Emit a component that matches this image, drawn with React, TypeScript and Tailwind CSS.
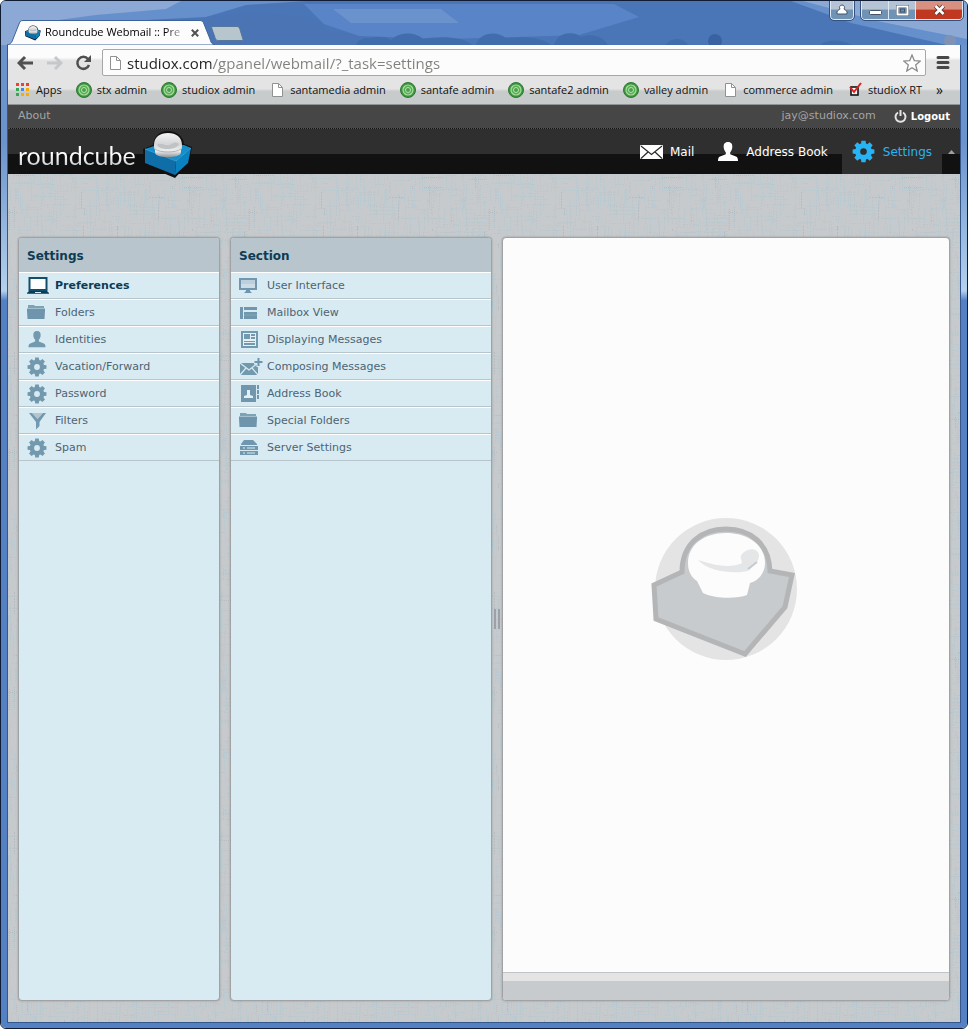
import React from 'react';
import clsx from 'clsx';

interface IconProps {
  className?: string;
}

interface ListItem {
  label: string;
  icon: React.ReactNode;
  active?: boolean;
}

/* ---------- background ---------- */

// woven threads, laid out once with a fixed seed so the tile never changes
function makeThreads(count: number, size: number) {
  let seed = 11;
  const rand = () => {
    seed = (seed * 16807) % 2147483647;
    return seed / 2147483647;
  };
  return Array.from({ length: count }, (_, i) => ({
    x: Math.floor(rand() * size),
    y: Math.floor(rand() * size),
    len: 3 + Math.floor(rand() * 20),
    dash: 1 + Math.floor(rand() * 2),
    horizontal: i % 5 < 2,
  }));
}

const TILE = 240;
const threads = makeThreads(1500, TILE);

function Linen() {
  return (
    <svg className="absolute inset-0 h-full w-full" aria-hidden="true" shapeRendering="crispEdges">
      <defs>
        <pattern id="linen" width={TILE} height={TILE} patternUnits="userSpaceOnUse">
          <rect width={TILE} height={TILE} fill="#c7cacc" />
          {threads.map((t, i) => (
            <path
              key={i}
              d={
                t.horizontal
                  ? `M${t.x} ${t.y + 0.5}h${t.len}`
                  : `M${t.x + 0.5} ${t.y}v${t.len}`
              }
              stroke={i % 29 === 0 ? '#b9bcbe' : '#b9c7ce'}
              strokeDasharray={`${t.dash} 1`}
            />
          ))}
        </pattern>
      </defs>
      <rect width="100%" height="100%" fill="url(#linen)" />
    </svg>
  );
}

function Glass() {
  return (
    <svg
      className="absolute inset-0 h-full w-full"
      viewBox="0 0 966 44"
      preserveAspectRatio="none"
      aria-hidden="true"
    >
      <rect width="966" height="44" fill="#4a76b8" />
      <path d="M0 0h305l-60 4-40 12-60 3-70 4-75 21z" fill="#6690cc" />
      <path d="M0 0h180l-15 8-70 6-45 6-25 24H0z" fill="#8ca8d4" />
      <path d="M205 16l50-5 60 6 14 14 60 5 20 8H210z" fill="#4a74b4" />
      <path d="M303 3h310l25 13-60 18-130 4-90-3-35-12z" fill="#5985c8" />
      <path d="M332 8h108l18 14H350z" fill="#6a92cc" />
      <path d="M790 0h50l126 28v16h-20L850 22z" fill="#6690cc" />
      <path d="M802 0h164v38l-90-18z" fill="#8ca8d4" />
      <g fill="#416dac">
        <path d="M355 44c2-7 10-7 15-7 12-3 20 1 30 7z" />
        <path d="M388 44c4-14 26-14 34-6 14-3 42-3 49 6z" />
        <path d="M475 44c4-14 22-14 30-7 20-2 38 0 45 7z" />
        <path d="M553 44c4-15 22-13 27-8 10-4 22-1 27 8z" />
        <path d="M665 44c4-8 18-8 22 0z" />
        <path d="M820 44c4-6 22-6 30 0z" />
      </g>
      <circle cx="714" cy="40" r="7" fill="#3a62a2" />
      <circle cx="949" cy="40" r="6" fill="#7f92b4" />
    </svg>
  );
}

/* ---------- browser icons ---------- */

function CubeIcon({ className }: IconProps) {
  return (
    <svg viewBox="0 0 50 47" className={className} aria-hidden="true">
      <defs>
        <linearGradient id="dome" x1="0" y1="0" x2="0" y2="1">
          <stop offset="0" stopColor="#f4f4f4" />
          <stop offset=".45" stopColor="#d4d6d8" />
          <stop offset=".75" stopColor="#eeeeee" />
          <stop offset="1" stopColor="#94989a" />
        </linearGradient>
      </defs>
      <path
        d="M0 18l10-4C11 4 18 0 25 0s15 4 16 13l8 3-3 16-14 15L1 34z"
        fill="#111111"
      />
      <path d="M2 18l9-3 30-1 7 3-15 13z" fill="#1690cc" />
      <path d="M2 18l31 12-1 14L2 32z" fill="#0f6ea8" />
      <path d="M33 30l15-13-3 15-13 12z" fill="#0a82c0" />
      <path d="M2 18l31 12 15-13" fill="none" stroke="#3c9cd0" strokeWidth="1" />
      <path
        d="M11 14C11 6 17 2 25 2s14 4 14 12c0 2 0 3-1 5v2c0 4-6 5-13 5s-13-1-13-5v-2c-1-2-1-3-1-5z"
        fill="url(#dome)"
      />
      <path d="M14 14c3-3 7 0 11 0s6-5 11-1c-2 6-19 7-22 1z" fill="#c0c3c6" />
      <path d="M12 18c5 4 21 4 26 0" fill="none" stroke="#b0b3b6" />
    </svg>
  );
}

function PageIcon() {
  return (
    <svg width="16" height="16" viewBox="0 0 16 16" aria-hidden="true">
      <path d="M3.500 1.500h6l4 4v9h-10z" fill="#ffffff" stroke="#8f9294" />
      <path d="M9.500 1.500v4h4" fill="none" stroke="#8f9294" />
    </svg>
  );
}

function GreenRing() {
  return (
    <svg width="16" height="16" viewBox="0 0 16 16" aria-hidden="true">
      <circle cx="8" cy="8" r="7.500" fill="#3f9440" stroke="#2f7a32" />
      <circle cx="8" cy="8" r="5" fill="#58ac56" stroke="#a8e0a0" strokeWidth="1.200" />
      <circle cx="8" cy="8" r="2.500" fill="#4d9f4c" stroke="#b4e6ac" />
    </svg>
  );
}

function AppsIcon() {
  const colors = ['#ea4335', '#ea4335', '#ea4335', '#34a853', '#4285f4', '#f9ab00', '#34a853', '#f9ab00', '#f9ab00'];
  return (
    <svg width="16" height="16" viewBox="0 0 16 16" aria-hidden="true">
      {colors.map((c, i) => (
        <rect key={i} x={1 + (i % 3) * 5} y={1 + Math.floor(i / 3) * 5} width="3" height="3" fill={c} />
      ))}
    </svg>
  );
}

function TickIcon() {
  return (
    <svg width="16" height="16" viewBox="0 0 16 16" aria-hidden="true">
      <rect x="4" y="5" width="7" height="8" fill="#ffffff" stroke="#111111" strokeWidth="1.600" />
      <path d="M3 5l4 5 7-9" fill="none" stroke="#e02020" strokeWidth="2" />
    </svg>
  );
}

/* ---------- app icons ---------- */

const gearTeeth = [0, 45, 90, 135, 180, 225, 270, 315];

function GearIcon({ className }: IconProps) {
  return (
    <svg viewBox="0 0 22 22" className={className} fill="currentColor" aria-hidden="true">
      {gearTeeth.map((a) => (
        <path key={a} d="M8.400 5L9 0.600h4L13.600 5z" transform={`rotate(${a} 11 11)`} />
      ))}
      <path
        fillRule="evenodd"
        d="M11 3a8 8 0 100 16 8 8 0 000-16zm0 4.800a3.200 3.200 0 110 6.400 3.200 3.200 0 010-6.400z"
      />
    </svg>
  );
}

function PersonIcon({ className }: IconProps) {
  return (
    <svg viewBox="0 0 20 20" className={className} fill="currentColor" aria-hidden="true">
      <path d="M10 0c3.400 0 4.600 2.400 4.300 5.200-.2 2.400-1.200 4.200-2.100 5.100v2l5.800 2.300c1.400.6 2 1.700 2 4.400H0c0-2.700.6-3.800 2-4.400l5.800-2.300v-2C6.900 9.400 5.900 7.600 5.700 5.200 5.400 2.400 6.600 0 10 0z" />
    </svg>
  );
}

function EnvelopeIcon() {
  return (
    <svg width="23" height="16" viewBox="0 0 23 16" aria-hidden="true">
      <rect y="1" width="23" height="14" rx="1" fill="#ffffff" />
      <path d="M1 2l10.500 8.500L22 2M1 14.500l7-6.500M22 14.500L15 8" fill="none" stroke="#2a2a2a" strokeWidth="1.200" />
    </svg>
  );
}

function LaptopIcon() {
  return (
    <svg width="22" height="18" viewBox="0 0 22 18" aria-hidden="true">
      <rect x="2.500" y="1" width="17" height="12" fill="#ffffff" stroke="#0f4f6c" strokeWidth="2" />
      <path d="M2 14h18l2 2H0z" fill="#0a3c58" />
      <path d="M0 16h22v1H0z" fill="#36649c" />
      <path d="M8 15.500h6" stroke="#d9ebf2" />
    </svg>
  );
}

function FolderIcon() {
  return (
    <svg width="20" height="16" viewBox="0 0 20 16" aria-hidden="true">
      <path d="M1 0h6l1 1h9v2H1z" fill="#7da3b2" />
      <path d="M0 3.500h18v2l-.5 8.500H.5L0 5.500z" fill="#6f95ad" />
    </svg>
  );
}

function FilterIcon() {
  return (
    <svg width="20" height="18" viewBox="0 0 20 18" aria-hidden="true">
      <path d="M5 1h11l-5.500 6z" fill="#b4c5cb" />
      <path d="M2 1h3l5.500 6L16 1h3l-6.500 9v4L9 17.500V10z" fill="#7399af" />
    </svg>
  );
}

function MonitorIcon() {
  return (
    <svg width="18" height="17" viewBox="0 0 18 17" aria-hidden="true">
      <rect x="1" y="2" width="16" height="10" fill="#ccdde8" stroke="#7296ae" strokeWidth="2" />
      <path d="M2 3h14v4H2z" fill="#bcd0dc" />
      <path d="M7 13h4v1l2 2H5l2-2z" fill="#6f95ad" />
    </svg>
  );
}

function MailboxIcon() {
  return (
    <svg width="20" height="14" viewBox="0 0 20 14" fill="#7097ae" aria-hidden="true">
      <path d="M1 1h3v12H1zM5 1h13v3H5zM5 6h13v7H5z" />
      <path d="M5 9h13" stroke="#7fa8b2" />
    </svg>
  );
}

function ArticleIcon() {
  return (
    <svg width="19" height="17" viewBox="0 0 19 17" aria-hidden="true">
      <rect x="3" y="1" width="15" height="15" fill="#e4f0f4" stroke="#7399ae" strokeWidth="2" />
      <path d="M5 3h6v5H5zM12 3h4v2h-4zM12 6h4v2h-4zM5 10h11v1H5zM5 12h11v2H5z" fill="#7399ae" />
    </svg>
  );
}

function ComposeIcon() {
  return (
    <svg width="24" height="18" viewBox="0 0 24 18" className="shrink-0" aria-hidden="true">
      <rect x="1" y="5" width="18" height="12" fill="#7399ae" />
      <path d="M1 5l9 7 9-7M1 17l6-7M19 17l-6-7" fill="none" stroke="#d9ebf2" strokeWidth="1.200" />
      <path d="M17.500 0h4v2.500H24v4h-2.500V9h-4V6.500H15v-4h2.500z" fill="#d9ebf2" />
      <path d="M19.500 0v8M15.500 4h8" stroke="#6f95ad" strokeWidth="2" />
    </svg>
  );
}

function ContactsIcon() {
  return (
    <svg width="20" height="18" viewBox="0 0 20 18" aria-hidden="true">
      <path d="M2 0h15v17H2zM18 0h2v4h-2zM18 5h2v4h-2zM18 10h2v4h-2z" fill="#7097ae" />
      <path d="M8 5h3v5l3 1v2H5v-2l3-1z" fill="#e4f0f4" />
    </svg>
  );
}

function ServerIcon() {
  return (
    <svg width="19" height="15" viewBox="0 0 19 15" fill="#7097ae" aria-hidden="true">
      <path d="M5 0h9l4 4v1H2V4zM1 6h18v4H1zM1 11h18v4H1z" />
      <path d="M4 8h2M8 8h8M4 13h2M8 13h8" stroke="#d9ebf2" />
    </svg>
  );
}

function Watermark() {
  return (
    <svg width="150" height="144" viewBox="0 0 150 144" aria-hidden="true">
      <circle cx="75" cy="72" r="71" fill="#e4e4e4" />
      <path
        d="M3 68l28-13c0-28 19-43 44-43s43 15 44 42l22 4-7 32-40 47L5 102z"
        fill="#c7cbcd"
        stroke="#b3b5b6"
        strokeWidth="5"
      />
      <path
        d="M37 46c0-18 16-30 38-30s39 12 39 30c0 10-7 18-15 20l-3 12c-10 4-31 4-44-2L46 64c-6-4-9-10-9-18z"
        fill="#fcfcfc"
      />
      <path
        d="M47 43c10 3 30 10 44 3 0-5-4-6 2-11 7-5 14-3 15 3 0 8-6 11-11 16-14 3-39 1-50-11z"
        fill="#e4e6e7"
      />
      <path d="M97 52l9-7" stroke="#c7cbcd" strokeWidth="2" />
    </svg>
  );
}

/* ---------- browser chrome ---------- */

const bookmarks = [
  { label: 'Apps', icon: <AppsIcon /> },
  { label: 'stx admin', icon: <GreenRing /> },
  { label: 'studiox admin', icon: <GreenRing /> },
  { label: 'santamedia admin', icon: <PageIcon /> },
  { label: 'santafe admin', icon: <GreenRing /> },
  { label: 'santafe2 admin', icon: <GreenRing /> },
  { label: 'valley admin', icon: <GreenRing /> },
  { label: 'commerce admin', icon: <PageIcon /> },
  { label: 'studioX RT', icon: <TickIcon /> },
];

function WindowButtons() {
  const glass = 'flex items-center justify-center bg-linear-to-b from-[#b4c4d4] from-45% to-[#7092b4] to-50%';
  return (
    <div className="flex h-[19px] gap-[7px] pr-1">
      <button
        type="button"
        aria-label="Profile"
        className={clsx(glass, 'w-6 rounded-b border border-t-0 border-[#dce8f4] outline-1 outline-[#34507c]')}
      >
        <svg width="12" height="12" viewBox="0 0 12 12" fill="#ffffff" stroke="#44546c">
          <path d="M6 1a2.500 2.500 0 012 4c0 1 3 1 3 3v2H1V8c0-2 3-2 3-3a2.500 2.500 0 012-4z" />
        </svg>
      </button>
      <div className="flex overflow-hidden rounded-b border border-t-0 border-[#dce8f4] outline-1 outline-[#34507c]">
        <button type="button" aria-label="Minimize" className={clsx(glass, 'w-[27px] border-r border-[#dce8f4]')}>
          <svg width="13" height="12" viewBox="0 0 13 12">
            <rect x="0.500" y="6.500" width="12" height="4" rx="1" fill="#ffffff" stroke="#44546c" />
          </svg>
        </button>
        <button type="button" aria-label="Maximize" className={clsx(glass, 'w-[27px] border-r border-[#dce8f4]')}>
          <svg width="13" height="11" viewBox="0 0 13 11">
            <rect x="1.500" y="1.500" width="10" height="8" fill="#6d8fb0" stroke="#44546c" strokeWidth="3" />
            <rect x="1.500" y="1.500" width="10" height="8" fill="none" stroke="#ffffff" strokeWidth="2" />
            <rect x="4.500" y="4" width="4" height="3" fill="none" stroke="#44546c" />
          </svg>
        </button>
        <button
          type="button"
          aria-label="Close"
          className="flex w-[46px] items-center justify-center bg-linear-to-b from-[#d89080] from-45% to-[#c03820] to-50%"
        >
          <svg width="13" height="12" viewBox="0 0 13 12">
            <path d="M2.500 2l8 8M10.500 2l-8 8" stroke="#5c3434" strokeWidth="4.500" />
            <path d="M2.500 2l8 8M10.500 2l-8 8" stroke="#ffffff" strokeWidth="2.600" />
          </svg>
        </button>
      </div>
    </div>
  );
}

function TitleBar() {
  return (
    <div className="relative flex h-11 shrink-0 items-start justify-between">
      <Glass />
      <div className="relative flex self-end">
        <div className="relative h-[25px] w-[210px]">
          <svg className="absolute inset-0" width="214" height="25" viewBox="0 0 214 25" aria-hidden="true">
            <path
              d="M6 25C10 24 11 22 12 19L18 4C19 1 20 .5 22 .5H198C201 .5 202 1 203 4L209 19C210 23 211 24 214 25Z"
              fill="#fcfcfc"
              stroke="#3d629c"
            />
          </svg>
          <div className="relative flex h-full items-center pr-3 pl-6">
            <CubeIcon className="h-4 w-4 shrink-0" />
            <span className="ml-1 flex-1 bg-linear-to-r from-black from-85% to-gray-300 bg-clip-text text-[11px] whitespace-nowrap text-transparent">
              Roundcube Webmail :: Pre
            </span>
            <button type="button" aria-label="Close tab" className="ml-2">
              <svg width="8" height="8" viewBox="0 0 8 8" stroke="#505050" strokeWidth="2">
                <path d="M.8.8l6.400 6.400M7.200.8L.8 7.200" />
              </svg>
            </button>
          </div>
        </div>
        <button type="button" aria-label="New tab" className="mt-1.5 h-4">
          <svg width="32" height="16" viewBox="0 0 32 16">
            <path d="M2 .5h24c2 0 2 1 3 3l3 10c0 1 0 1-2 1H8c-2 0-3 0-4-3L1 3C.5 1 .5.5 2 .5z" fill="#b7c5cc" stroke="#55779c" />
          </svg>
        </button>
      </div>
      <div className="relative">
        <WindowButtons />
      </div>
    </div>
  );
}

function Toolbar() {
  return (
    <div className="flex h-[31px] items-center gap-3 bg-linear-to-b from-[#fcfcfc] from-40% to-[#e4e4e4] to-50% pt-1 pr-2.5 pl-[9px]">
      <button type="button" aria-label="Back">
        <svg width="17" height="16" viewBox="0 0 17 16" fill="none" stroke="#505050" strokeWidth="3">
          <path d="M16 8H3M8 2L2 8l6 6" />
        </svg>
      </button>
      <button type="button" aria-label="Forward">
        <svg width="17" height="16" viewBox="0 0 17 16" fill="none" stroke="#c4c8ca" strokeWidth="3">
          <path d="M1 8h13M9 2l6 6-6 6" />
        </svg>
      </button>
      <button type="button" aria-label="Reload">
        <svg width="17" height="16" viewBox="0 0 17 16" fill="none" stroke="#505050" strokeWidth="2.500">
          <path d="M13 4a6 6 0 101 6" />
          <path d="M16 0v7H9z" fill="#505050" stroke="none" />
        </svg>
      </button>
      <div className="-mx-0.5 flex h-[27px] flex-1 items-center rounded-xs border border-[#a4a8aa] bg-[#fcfcfc] pr-1 pl-1">
        <PageIcon />
        <div className="ml-1 h-6 flex-1 text-[15px] leading-6">
          <input
            type="text"
            aria-label="Address"
            defaultValue="studiox.com/gpanel/webmail/?_task=settings"
            className="w-full bg-linear-to-r from-[#202020] from-[84px] to-[#80807c] to-[85px] bg-clip-text text-transparent outline-none"
          />
        </div>
        <button type="button" aria-label="Bookmark this page">
          <svg width="18" height="18" viewBox="0 0 18 18" fill="#ffffff" stroke="#8c8c8c" strokeWidth="1.300">
            <path d="M9 1l2.300 5.600 6 .5-4.600 3.900 1.500 6L9 13.700 3.800 17l1.500-6L.7 7.100l6-.5z" />
          </svg>
        </button>
      </div>
      <button type="button" aria-label="Menu">
        <svg width="14" height="13" viewBox="0 0 14 13" stroke="#484848" strokeWidth="3" strokeLinecap="round">
          <path d="M2 1.500h10M2 6.500h10M2 11.500h10" />
        </svg>
      </button>
    </div>
  );
}

function BookmarksBar() {
  return (
    <nav
      aria-label="Bookmarks"
      className="flex h-[29px] items-center gap-3.5 overflow-hidden border-b border-[#909496] bg-linear-to-b from-[#e4e4e4] from-45% to-[#c8cbcc] to-55% pl-[7px] text-[11px] whitespace-nowrap text-[#101010]"
    >
      {bookmarks.map(({ label, icon }) => (
        <a key={label} href="#" className="flex items-center gap-[5px]">
          {icon}
          {label}
        </a>
      ))}
      <button type="button" aria-label="More bookmarks" className="text-sm leading-4">
        »
      </button>
    </nav>
  );
}

/* ---------- webmail ---------- */

function AppHeader() {
  return (
    <header className="relative">
      <div className="flex h-[23px] items-center justify-between bg-[#464646] px-2.5 text-[11px] text-[#a4a4a4]">
        <a href="#">About</a>
        <div className="flex items-center gap-[18px]">
          <span>jay@studiox.com</span>
          <a href="#" className="flex items-center gap-1 text-[10px] font-bold text-white">
            <svg width="13" height="13" viewBox="0 0 13 13" fill="none" stroke="#e4e4e4" strokeWidth="2">
              <path d="M4 2.500a5 5 0 105 0M6.500 0v6" />
            </svg>
            Logout
          </a>
        </div>
      </div>
      <div className="flex h-[46px] items-stretch justify-between border-t border-dotted border-[#555555] bg-linear-to-b from-[#2f2f2f] from-55% to-[#111111] to-55%">
        <a href="#" aria-label="roundcube" className="flex items-start gap-[7px] pl-2.5">
          <span className="mt-2 bg-linear-to-b from-white from-50% to-[#a4acb0] bg-clip-text font-['Lato'] text-[25px] leading-9 text-transparent">
            roundcube
          </span>
          <CubeIcon className="mt-0.5 h-[47px] w-[50px]" />
        </a>
        <nav className="flex text-xs text-white">
          <a href="#" className="flex items-center gap-[7px] px-2.5">
            <EnvelopeIcon />
            Mail
          </a>
          <a href="#" className="flex items-center gap-2 px-3.5">
            <PersonIcon className="h-5 w-5" />
            Address Book
          </a>
          <a href="#" aria-current="page" className="flex items-center gap-2 bg-[#2f2f2f] px-2.5 text-[#28b4f4]">
            <GearIcon className="h-[23px] w-[23px]" />
            Settings
          </a>
          <button
            type="button"
            aria-label="Collapse header"
            className="flex w-[18px] items-center justify-center"
          >
            <svg width="7" height="4" viewBox="0 0 7 4" fill="#a0a0a0">
              <path d="M0 4l3.500-4L7 4z" />
            </svg>
          </button>
        </nav>
      </div>
    </header>
  );
}

const settings: ListItem[] = [
  { label: 'Preferences', icon: <LaptopIcon />, active: true },
  { label: 'Folders', icon: <FolderIcon /> },
  { label: 'Identities', icon: <PersonIcon className="h-[17px] w-5 text-[#7399ae]" /> },
  { label: 'Vacation/Forward', icon: <GearIcon className="h-5 w-5 text-[#7399ae]" /> },
  { label: 'Password', icon: <GearIcon className="h-5 w-5 text-[#7399ae]" /> },
  { label: 'Filters', icon: <FilterIcon /> },
  { label: 'Spam', icon: <GearIcon className="h-5 w-5 text-[#7399ae]" /> },
];

const sections: ListItem[] = [
  { label: 'User Interface', icon: <MonitorIcon /> },
  { label: 'Mailbox View', icon: <MailboxIcon /> },
  { label: 'Displaying Messages', icon: <ArticleIcon /> },
  { label: 'Composing Messages', icon: <ComposeIcon /> },
  { label: 'Address Book', icon: <ContactsIcon /> },
  { label: 'Special Folders', icon: <FolderIcon /> },
  { label: 'Server Settings', icon: <ServerIcon /> },
];

interface ListBoxProps {
  title: string;
  items: ListItem[];
  className: string;
}

function ListBox({ title, items, className }: ListBoxProps) {
  return (
    <section
      className={clsx(
        'shrink-0 overflow-hidden rounded border border-[#a0a2a4] bg-[#d9ebf2] shadow-[0_0_2px_#909496]',
        className
      )}
    >
      <h2 className="h-[34px] bg-[#b8c5cc] px-2 text-xs leading-9 font-bold text-[#0c3c54]">{title}</h2>
      <ul>
        {items.map(({ label, icon, active }) => (
          <li key={label} className="h-[27px] border-t border-b border-t-white border-b-[#b8c5cc]">
            <a
              href="#"
              className={clsx(
                'flex h-full items-center gap-1.5 px-2 text-[11px]',
                active ? 'font-bold text-[#0c3c54]' : 'text-[#4c6474]'
              )}
            >
              <span className="flex w-[22px] shrink-0">{icon}</span>
              <span className="pt-0.5">{label}</span>
            </a>
          </li>
        ))}
      </ul>
    </section>
  );
}

export default function App() {
  return (
    <div className="flex min-h-screen flex-col overflow-hidden rounded-md border border-[#101c34] bg-[#d4e4f4] font-['Open_Sans','Noto_Sans',sans-serif]">
      <TitleBar />
      <div className="flex flex-1 flex-col bg-linear-to-b from-[#6c94cc] from-10% via-[#b4d0ec] via-25% to-[#5480c4] to-26% px-1.5 pb-[5px]">
        <div className="flex flex-1 flex-col border border-t-0 border-[#34588c]">
          <Toolbar />
          <BookmarksBar />
          <div className="relative flex flex-1 flex-col font-['DejaVu_Sans',Verdana,sans-serif]">
            <Linen />
            <AppHeader />
            <main className="relative flex flex-1 px-2.5 pt-[63px] pb-[21px]">
              <ListBox title="Settings" items={settings} className="mr-2.5 w-[202px]" />
              <ListBox title="Section" items={sections} className="w-[262px]" />
              <div
                className="flex w-2.5 shrink-0 cursor-col-resize items-center justify-center gap-0.5"
                role="separator"
                aria-orientation="vertical"
              >
                <span className="h-5 w-0.5 bg-[#9ca0ac]" />
                <span className="h-5 w-0.5 bg-[#9ca0ac]" />
              </div>
              <section
                aria-label="Preferences"
                className="flex flex-1 flex-col overflow-hidden rounded border border-[#a0a2a4] bg-[#fcfcfc] shadow-[0_0_2px_#909496]"
              >
                <div className="flex flex-1 items-center justify-center pb-8">
                  <Watermark />
                </div>
                <div className="h-[9px] border-t border-[#c0c4c6] bg-[#e4e4e4]" />
                <div className="h-[19px] bg-[#c7cbcd]" />
              </section>
            </main>
          </div>
        </div>
      </div>
    </div>
  );
}
